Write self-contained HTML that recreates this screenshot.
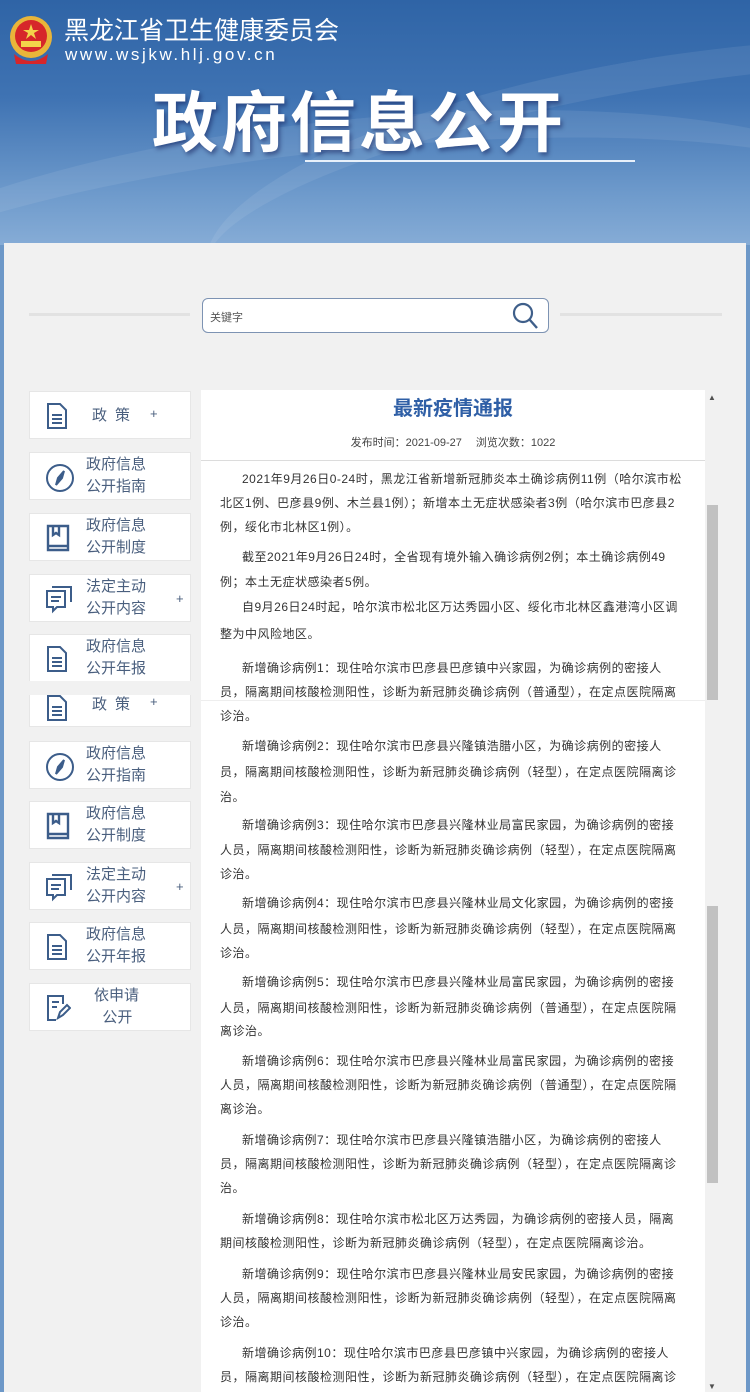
<!DOCTYPE html>
<html><head><meta charset="utf-8">
<style>
*{margin:0;padding:0;box-sizing:border-box}
body{width:750px;height:1392px;overflow:hidden;position:relative;font-family:"Liberation Sans","Noto Sans CJK SC",sans-serif;background:#6d98c8}
.hdr{position:absolute;left:0;top:0;width:750px;height:245px;background:linear-gradient(180deg,#2f64a6 0%,#3f73b3 40%,#6f9bcc 80%,#86acd6 100%);overflow:hidden}
.sw{position:absolute;border-radius:50%;border-top:30px solid rgba(255,255,255,.08)}
.panel{position:absolute;left:4px;top:243px;width:742px;height:1149px;background:#f1f1f1}
.ab{position:absolute}
.item{position:absolute;left:29px;width:162px;height:48px;background:#fff;border:1px solid #e6e6e6;color:#4a5f7e;font-size:15px;line-height:22px}
.item svg{position:absolute;left:15px;top:10px}
.item .t{position:absolute;left:56px;top:1px}
.item .p{position:absolute;left:146px;top:13px;font-size:13px}
.ln{position:absolute;white-space:nowrap;font-size:12px;letter-spacing:.5px;color:#333;height:18px;line-height:18px}
</style></head><body>
<div class="hdr">
 <div class="sw" style="left:-200px;top:120px;width:1100px;height:300px;transform:rotate(-6deg)"></div>
 <div class="sw" style="left:200px;top:60px;width:900px;height:260px;transform:rotate(-10deg)"></div>
 <svg class="ab" style="left:8px;top:14px" width="46" height="52" viewBox="0 0 46 52"><circle cx="23" cy="23" r="21" fill="#e9b53a"/><circle cx="23" cy="22" r="16" fill="#d6262a"/><polygon points="23,10 25,16 31,16 26,19 28,25 23,21 18,25 20,19 15,16 21,16" fill="#f3d34a"/><rect x="13" y="27" width="20" height="6" fill="#f3d34a"/><path d="M6 40 Q23 54 40 40 L38 50 L8 50Z" fill="#d6262a"/></svg>
 <div class="ab" style="left:64px;top:14px;color:#fff;font-size:25px;line-height:30px;font-family:'Noto Sans CJK SC',sans-serif">黑龙江省卫生健康委员会</div>
 <div class="ab" style="left:65px;top:45px;color:#fff;font-size:17px;letter-spacing:2.6px;line-height:20px">www.wsjkw.hlj.gov.cn</div>
 <div class="ab" style="left:152px;top:78px;color:#fff;font-size:66px;font-weight:bold;letter-spacing:3px;line-height:80px;text-shadow:2px 3px 4px rgba(0,0,60,.4);font-family:'Noto Sans CJK SC',sans-serif">政府信息公开</div>
 <div class="ab" style="left:305px;top:160px;width:330px;height:2px;background:#e8f0fa"></div>
</div>
<div class="panel"></div>
<div class="ab" style="left:29px;top:313px;width:161px;height:3px;background:#e2e2e2"></div>
<div class="ab" style="left:560px;top:313px;width:162px;height:3px;background:#e2e2e2"></div>
<div class="ab" style="left:202px;top:298px;width:347px;height:35px;background:#fff;border:1px solid #7d93b3;border-radius:6px;font-size:11px;color:#555;padding:10px 0 0 7px">关键字</div>
<svg class="ab" style="left:510px;top:301px" width="30" height="30" viewBox="0 0 30 30"><circle cx="13" cy="12" r="9" fill="none" stroke="#3f5f8a" stroke-width="2.2"/><line x1="19.5" y1="18.5" x2="27" y2="27" stroke="#3f5f8a" stroke-width="2.4"/></svg>

<div class="ab" style="left:201px;top:390px;width:504px;height:1002px;background:#fff"></div>
<div class="ab" style="left:201px;top:460px;width:504px;height:1px;background:#dcdcdc"></div>
<div class="ab" style="left:201px;top:700px;width:504px;height:1px;background:#eee"></div>
<div class="ab" style="left:201px;top:393px;width:504px;text-align:center;color:#2f5fa6;font-size:20px;font-weight:bold;line-height:28px;font-family:'Noto Sans CJK SC',sans-serif">最新疫情通报</div>
<div class="ab" style="left:201px;top:435px;width:504px;text-align:center;color:#444;font-size:11px;line-height:16px">发布时间：2021-09-27　 浏览次数：1022</div>
<div class="ab" style="left:706px;top:390px;width:12px;height:1002px;background:#f1f1f1"></div>
<div class="ab" style="left:707px;top:505px;width:11px;height:195px;background:#c1c1c1"></div>
<div class="ab" style="left:707px;top:906px;width:11px;height:277px;background:#c1c1c1"></div>
<div class="ab" style="left:708px;top:393px;font-size:8px;color:#505050">▲</div>
<div class="ab" style="left:708px;top:1382px;font-size:8px;color:#505050">▼</div>

<div class="item" style="top:391px"><svg width="24" height="28" viewBox="0 0 24 28" fill="none" stroke="#3c5d8a" stroke-width="2"><path d="M3 2h12l6 6v18H3z"/><path d="M7 13h10M7 17h10M7 21h10"/></svg><div class="t" style="left:62px;top:13px;letter-spacing:8px">政策</div><div class="p" style="left:120px;top:11px">+</div></div>
<div class="item" style="top:452px"><svg width="30" height="30" viewBox="0 0 30 30" fill="none" stroke="#3c5d8a" stroke-width="2"><circle cx="15" cy="15" r="13"/><path d="M19 8l-6 7-2 7 6-7z" fill="#3c5d8a"/></svg><div class="t">政府信息<br>公开指南</div></div>
<div class="item" style="top:513px"><svg width="26" height="28" viewBox="0 0 26 28" fill="none" stroke="#3c5d8a" stroke-width="2.4"><path d="M3 2h20v24H3z"/><path d="M8 2v9l3-2 3 2V2"/><path d="M3 22h20"/></svg><div class="t">政府信息<br>公开制度</div></div>
<div class="item" style="top:574px"><svg width="28" height="30" viewBox="0 0 28 30" fill="none" stroke="#3c5d8a" stroke-width="2"><path d="M2 6h18v16h-8l-4 4v-4H2z"/><path d="M7 2h19v15"/><path d="M6 12h10M6 16h8"/></svg><div class="t">法定主动<br>公开内容</div><div class="p">+</div></div>
<div class="item" style="top:634px"><svg width="24" height="28" viewBox="0 0 24 28" fill="none" stroke="#3c5d8a" stroke-width="2"><path d="M3 2h12l6 6v18H3z"/><path d="M7 13h10M7 17h10M7 21h10"/></svg><div class="t">政府信息<br>公开年报</div></div>
<div class="item" style="top:680px;height:47px;border-top:none"><svg width="24" height="28" viewBox="0 0 24 28" fill="none" stroke="#3c5d8a" stroke-width="2" style="top:14px"><path d="M3 2h12l6 6v18H3z"/><path d="M7 13h10M7 17h10M7 21h10"/></svg><div class="t" style="left:62px;top:14px;letter-spacing:8px">政策</div><div class="p" style="left:120px;top:11px">+</div></div>
<div class="ab" style="left:4px;top:681px;width:197px;height:14px;background:#f1f1f1"></div>
<div class="item" style="top:741px"><svg width="30" height="30" viewBox="0 0 30 30" fill="none" stroke="#3c5d8a" stroke-width="2"><circle cx="15" cy="15" r="13"/><path d="M19 8l-6 7-2 7 6-7z" fill="#3c5d8a"/></svg><div class="t">政府信息<br>公开指南</div></div>
<div class="item" style="top:801px"><svg width="26" height="28" viewBox="0 0 26 28" fill="none" stroke="#3c5d8a" stroke-width="2.4"><path d="M3 2h20v24H3z"/><path d="M8 2v9l3-2 3 2V2"/><path d="M3 22h20"/></svg><div class="t">政府信息<br>公开制度</div></div>
<div class="item" style="top:862px"><svg width="28" height="30" viewBox="0 0 28 30" fill="none" stroke="#3c5d8a" stroke-width="2"><path d="M2 6h18v16h-8l-4 4v-4H2z"/><path d="M7 2h19v15"/><path d="M6 12h10M6 16h8"/></svg><div class="t">法定主动<br>公开内容</div><div class="p">+</div></div>
<div class="item" style="top:922px"><svg width="24" height="28" viewBox="0 0 24 28" fill="none" stroke="#3c5d8a" stroke-width="2"><path d="M3 2h12l6 6v18H3z"/><path d="M7 13h10M7 17h10M7 21h10"/></svg><div class="t">政府信息<br>公开年报</div></div>
<div class="item" style="top:983px"><svg width="26" height="28" viewBox="0 0 26 28" fill="none" stroke="#3c5d8a" stroke-width="2"><path d="M18 10V2H3v24h8"/><path d="M7 8h7M7 13h5"/><path d="M13 24l2-6 7-7 3 3-7 7z"/></svg><div class="t" style="left:64px">依申请<br>&nbsp;&nbsp;公开</div></div>

<div class="ln" style="left:242px;top:470px">2021年9月26日0-24时，黑龙江省新增新冠肺炎本土确诊病例11例（哈尔滨市松</div>
<div class="ln" style="left:220px;top:494px">北区1例、巴彦县9例、木兰县1例）；新增本土无症状感染者3例（哈尔滨市巴彦县2</div>
<div class="ln" style="left:220px;top:518px">例，绥化市北林区1例）。</div>
<div class="ln" style="left:242px;top:548px">截至2021年9月26日24时，全省现有境外输入确诊病例2例；本土确诊病例49</div>
<div class="ln" style="left:220px;top:573px">例；本土无症状感染者5例。</div>
<div class="ln" style="left:242px;top:598px">自9月26日24时起，哈尔滨市松北区万达秀园小区、绥化市北林区鑫港湾小区调</div>
<div class="ln" style="left:220px;top:625px">整为中风险地区。</div>
<div class="ln" style="left:242px;top:659px">新增确诊病例1：现住哈尔滨市巴彦县巴彦镇中兴家园，为确诊病例的密接人</div>
<div class="ln" style="left:220px;top:683px">员，隔离期间核酸检测阳性，诊断为新冠肺炎确诊病例（普通型），在定点医院隔离</div>
<div class="ln" style="left:220px;top:707px">诊治。</div>

<div class="ln" style="left:242px;top:737px">新增确诊病例2：现住哈尔滨市巴彦县兴隆镇浩腊小区，为确诊病例的密接人</div>
<div class="ln" style="left:220px;top:763px">员，隔离期间核酸检测阳性，诊断为新冠肺炎确诊病例（轻型），在定点医院隔离诊</div>
<div class="ln" style="left:220px;top:788px">治。</div>
<div class="ln" style="left:242px;top:816px">新增确诊病例3：现住哈尔滨市巴彦县兴隆林业局富民家园，为确诊病例的密接</div>
<div class="ln" style="left:220px;top:841px">人员，隔离期间核酸检测阳性，诊断为新冠肺炎确诊病例（轻型），在定点医院隔离</div>
<div class="ln" style="left:220px;top:865px">诊治。</div>
<div class="ln" style="left:242px;top:894px">新增确诊病例4：现住哈尔滨市巴彦县兴隆林业局文化家园，为确诊病例的密接</div>
<div class="ln" style="left:220px;top:920px">人员，隔离期间核酸检测阳性，诊断为新冠肺炎确诊病例（轻型），在定点医院隔离</div>
<div class="ln" style="left:220px;top:944px">诊治。</div>
<div class="ln" style="left:242px;top:973px">新增确诊病例5：现住哈尔滨市巴彦县兴隆林业局富民家园，为确诊病例的密接</div>
<div class="ln" style="left:220px;top:999px">人员，隔离期间核酸检测阳性，诊断为新冠肺炎确诊病例（普通型），在定点医院隔</div>
<div class="ln" style="left:220px;top:1022px">离诊治。</div>
<div class="ln" style="left:242px;top:1052px">新增确诊病例6：现住哈尔滨市巴彦县兴隆林业局富民家园，为确诊病例的密接</div>
<div class="ln" style="left:220px;top:1076px">人员，隔离期间核酸检测阳性，诊断为新冠肺炎确诊病例（普通型），在定点医院隔</div>
<div class="ln" style="left:220px;top:1100px">离诊治。</div>
<div class="ln" style="left:242px;top:1131px">新增确诊病例7：现住哈尔滨市巴彦县兴隆镇浩腊小区，为确诊病例的密接人</div>
<div class="ln" style="left:220px;top:1155px">员，隔离期间核酸检测阳性，诊断为新冠肺炎确诊病例（轻型），在定点医院隔离诊</div>
<div class="ln" style="left:220px;top:1179px">治。</div>
<div class="ln" style="left:242px;top:1210px">新增确诊病例8：现住哈尔滨市松北区万达秀园，为确诊病例的密接人员，隔离</div>
<div class="ln" style="left:220px;top:1234px">期间核酸检测阳性，诊断为新冠肺炎确诊病例（轻型），在定点医院隔离诊治。</div>
<div class="ln" style="left:242px;top:1265px">新增确诊病例9：现住哈尔滨市巴彦县兴隆林业局安民家园，为确诊病例的密接</div>
<div class="ln" style="left:220px;top:1289px">人员，隔离期间核酸检测阳性，诊断为新冠肺炎确诊病例（轻型），在定点医院隔离</div>
<div class="ln" style="left:220px;top:1313px">诊治。</div>
<div class="ln" style="left:242px;top:1344px">新增确诊病例10：现住哈尔滨市巴彦县巴彦镇中兴家园，为确诊病例的密接人</div>
<div class="ln" style="left:220px;top:1368px">员，隔离期间核酸检测阳性，诊断为新冠肺炎确诊病例（轻型），在定点医院隔离诊</div>
</body></html>
